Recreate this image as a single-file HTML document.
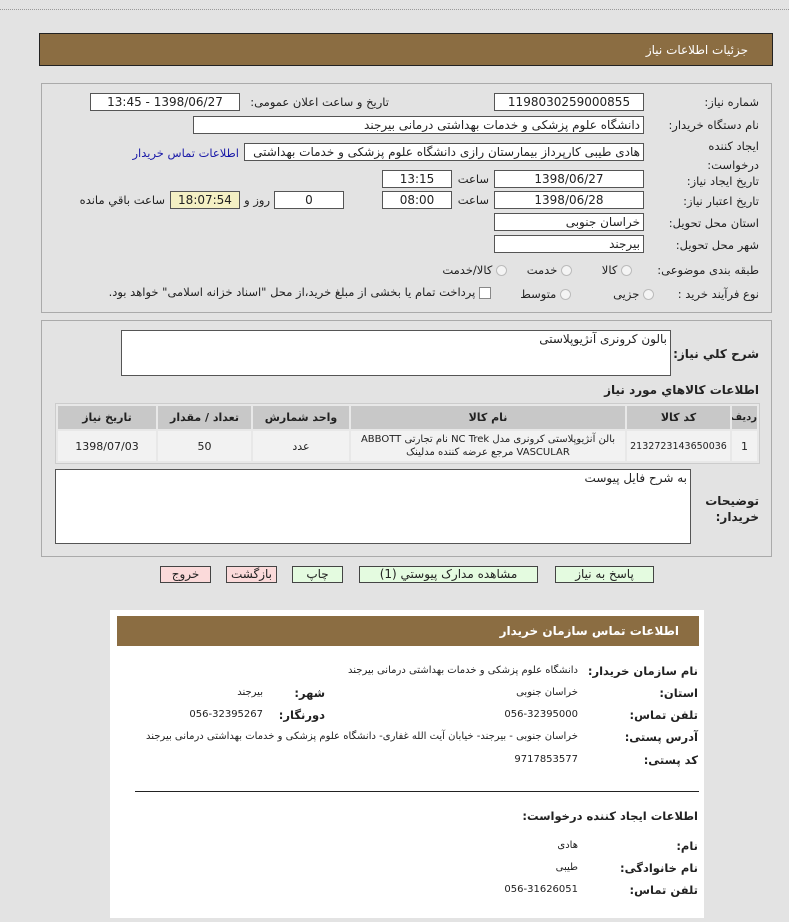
<!DOCTYPE html>
<html><head><meta charset="utf-8">
<style>
*{margin:0;padding:0;box-sizing:border-box}
body{width:789px;height:922px;background:#e3e3e3;font-family:"DejaVu Sans","Liberation Sans",sans-serif;font-size:11px;color:#222;position:relative;overflow:hidden;direction:rtl}
.a{position:absolute;white-space:nowrap}
.in{position:absolute;background:#fff;border:1px solid #555;height:18px;line-height:16px;font-size:12px;padding:0 3px;white-space:nowrap;overflow:hidden}
.c{text-align:center}
.lbl{position:absolute;white-space:nowrap;font-size:11.5px;text-align:right}
.panel{position:absolute;border:1px solid #aaa;background:#e3e3e3}
.rad{display:inline-block;width:11px;height:11px;border-radius:50%;border:1px solid #bbb;background:#f4f4f4;vertical-align:middle}
.btn{position:absolute;height:17px;border:1px solid #444;font-size:12px;text-align:center;line-height:15px;background:#e4fbe0}
.pink{background:#fbdada}
table{border-collapse:separate;border-spacing:2px;font-size:11px;table-layout:fixed;white-space:normal}
td,th{text-align:center;overflow:hidden}
th{background:#c8c8c8;height:23px;font-weight:bold}
td{background:#f2f2f2}
.b{font-weight:bold}
</style></head><body>
<div class="a" style="left:0;top:9px;width:789px;border-top:1px dotted #999"></div>
<div class="a" style="left:39px;top:33px;width:734px;height:33px;background:#8b6d42;border:1px solid #222;color:#fff;font-size:12px;line-height:33px;padding-right:24px;text-align:right">جزئیات اطلاعات نیاز</div>

<div class="panel" style="left:41px;top:83px;width:731px;height:230px"></div>
<div class="lbl" style="right:30px;top:95px">شماره نیاز:</div>
<div class="in c" style="left:494px;top:93px;width:150px">1198030259000855</div>
<div class="lbl" style="right:400px;top:95px">تاریخ و ساعت اعلان عمومی:</div>
<div class="in c" style="left:90px;top:93px;width:150px">1398/06/27 - 13:45</div>

<div class="lbl" style="right:30px;top:118px">نام دستگاه خریدار:</div>
<div class="in" style="left:193px;top:116px;width:451px;text-align:right">دانشگاه علوم پزشکی و خدمات بهداشتی درمانی بیرجند</div>

<div class="lbl" style="right:30px;top:137px;line-height:19px">ایجاد کننده<br>درخواست:</div>
<div class="in" style="left:244px;top:143px;width:400px;text-align:right">هادی طیبی کارپرداز بیمارستان رازی دانشگاه علوم پزشکی و خدمات بهداشتی</div>
<div class="lbl" style="right:550px;top:146px;color:#1a1aa8">اطلاعات تماس خریدار</div>

<div class="lbl" style="right:30px;top:174px">تاریخ ایجاد نیاز:</div>
<div class="in c" style="left:494px;top:170px;width:150px">1398/06/27</div>
<div class="lbl" style="right:300px;top:172px">ساعت</div>
<div class="in c" style="left:382px;top:170px;width:70px">13:15</div>

<div class="lbl" style="right:30px;top:194px">تاریخ اعتبار نیاز:</div>
<div class="in c" style="left:494px;top:191px;width:150px">1398/06/28</div>
<div class="lbl" style="right:300px;top:193px">ساعت</div>
<div class="in c" style="left:382px;top:191px;width:70px">08:00</div>
<div class="in c" style="left:274px;top:191px;width:70px">0</div>
<div class="lbl" style="right:519px;top:193px">روز و</div>
<div class="in c" style="left:170px;top:191px;width:70px;background:#f4f0c4">18:07:54</div>
<div class="lbl" style="right:624px;top:193px">ساعت باقي مانده</div>

<div class="lbl" style="right:30px;top:216px">استان محل تحویل:</div>
<div class="in" style="left:494px;top:213px;width:150px;text-align:right">خراسان جنوبی</div>
<div class="lbl" style="right:30px;top:238px">شهر محل تحویل:</div>
<div class="in" style="left:494px;top:235px;width:150px;text-align:right">بیرجند</div>

<div class="lbl" style="right:30px;top:263px">طبقه بندی موضوعی:</div>
<div class="lbl" style="right:157px;top:263px"><span class="rad"></span> کالا</div>
<div class="lbl" style="right:217px;top:263px"><span class="rad"></span> خدمت</div>
<div class="lbl" style="right:282px;top:263px"><span class="rad"></span> کالا/خدمت</div>

<div class="lbl" style="right:30px;top:287px">نوع فرآیند خرید :</div>
<div class="lbl" style="right:135px;top:287px"><span class="rad"></span> جزیی</div>
<div class="lbl" style="right:218px;top:287px"><span class="rad"></span> متوسط</div>
<div class="lbl" style="right:298px;top:285px"><span style="display:inline-block;width:12px;height:12px;border:1px solid #888;background:#fff;vertical-align:middle"></span> پرداخت تمام یا بخشی از مبلغ خرید،از محل "اسناد خزانه اسلامی" خواهد بود.</div>

<div class="panel" style="left:41px;top:320px;width:731px;height:237px"></div>
<div class="lbl b" style="right:30px;top:347px;font-size:12px">شرح کلي نیاز:</div>
<div class="in" style="left:121px;top:330px;width:550px;height:46px;text-align:right;line-height:16px">بالون کرونری آنژیوپلاستی</div>
<div class="lbl b" style="right:30px;top:383px;font-size:12px">اطلاعات کالاهاي مورد نیاز</div>
<div class="a" style="left:55px;top:403px;width:705px;border:1px solid #ccc;background:#e8e8e8;white-space:normal">
<table style="width:703px">
<colgroup><col style="width:25px"><col style="width:103px"><col style="width:274px"><col style="width:96px"><col style="width:93px"><col></colgroup>
<tr><th style="font-size:10px">ردیف</th><th>کد کالا</th><th>نام کالا</th><th>واحد شمارش</th><th>تعداد / مقدار</th><th>تاریخ نیاز</th></tr>
<tr style="height:30px"><td>1</td><td style="font-size:9.5px">2132723143650036</td><td style="font-size:10px;line-height:13px">بالن آنژیوپلاستی کرونری مدل NC Trek نام تجارتی ABBOTT VASCULAR مرجع عرضه کننده مدلینک</td><td>عدد</td><td>50</td><td>1398/07/03</td></tr>
</table></div>
<div class="lbl b" style="right:30px;top:493px;font-size:12px;line-height:16px">توضیحات<br>خریدار:</div>
<div class="in" style="left:55px;top:469px;width:636px;height:75px;text-align:right;line-height:16px">به شرح فایل پیوست</div>

<div class="btn" style="left:555px;top:566px;width:99px">پاسخ به نیاز</div>
<div class="btn" style="left:359px;top:566px;width:179px">مشاهده مدارک پیوستي (1)</div>
<div class="btn" style="left:292px;top:566px;width:51px">چاپ</div>
<div class="btn pink" style="left:226px;top:566px;width:51px">بازگشت</div>
<div class="btn pink" style="left:160px;top:566px;width:51px">خروج</div>

<div class="a" style="left:110px;top:610px;width:594px;height:308px;background:#fff"></div>
<div class="a b" style="left:117px;top:616px;width:582px;height:30px;background:#8b6d42;color:#fff;font-size:12px;line-height:30px;padding-right:20px;text-align:right">اطلاعات تماس سازمان خریدار</div>
<div class="lbl b" style="right:91px;top:664px">نام سازمان خریدار:</div>
<div class="lbl" style="right:211px;top:665px;font-size:10px">دانشگاه علوم پزشکی و خدمات بهداشتی درمانی بیرجند</div>
<div class="lbl b" style="right:91px;top:686px">استان:</div>
<div class="lbl" style="right:211px;top:687px;font-size:10px">خراسان جنوبی</div>
<div class="lbl b" style="right:464px;top:686px">شهر:</div>
<div class="lbl" style="right:526px;top:687px;font-size:10px">بیرجند</div>
<div class="lbl b" style="right:91px;top:708px">تلفن تماس:</div>
<div class="lbl" style="right:211px;top:709px;font-size:10px">056-32395000</div>
<div class="lbl b" style="right:464px;top:708px">دورنگار:</div>
<div class="lbl" style="right:526px;top:709px;font-size:10px">056-32395267</div>
<div class="lbl b" style="right:91px;top:730px">آدرس پستی:</div>
<div class="lbl" style="right:211px;top:731px;font-size:10px">خراسان جنوبی - بیرجند- خیابان آیت الله غفاری- دانشگاه علوم پزشکی و خدمات بهداشتی درمانی بیرجند</div>
<div class="lbl b" style="right:91px;top:753px">کد پستی:</div>
<div class="lbl" style="right:211px;top:754px;font-size:10px">9717853577</div>
<div class="a" style="left:135px;top:791px;width:564px;border-top:1px solid #222"></div>
<div class="lbl b" style="right:91px;top:809px">اطلاعات ایجاد کننده درخواست:</div>
<div class="lbl b" style="right:91px;top:839px">نام:</div>
<div class="lbl" style="right:211px;top:840px;font-size:10px">هادی</div>
<div class="lbl b" style="right:91px;top:861px">نام خانوادگی:</div>
<div class="lbl" style="right:211px;top:862px;font-size:10px">طیبی</div>
<div class="lbl b" style="right:91px;top:883px">تلفن تماس:</div>
<div class="lbl" style="right:211px;top:884px;font-size:10px">056-31626051</div>
</body></html>
